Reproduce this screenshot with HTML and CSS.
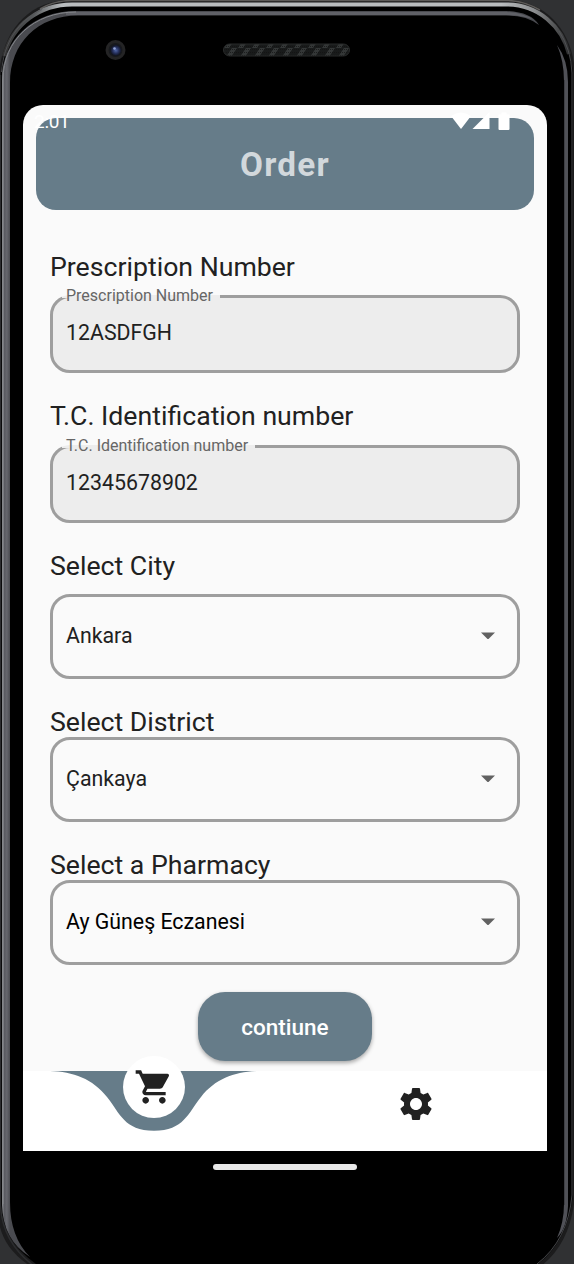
FILE: index.html
```html
<!DOCTYPE html>
<html lang="en">
<head>
<meta charset="utf-8">
<title>Order</title>
<link rel="stylesheet" href="styles.css">
</head>
<body>
<div class="device">
  <svg class="chassis" viewBox="0 0 574 1264" aria-hidden="true">
    <defs>
      <linearGradient id="shine" gradientUnits="userSpaceOnUse" x1="5" y1="0" x2="569" y2="0">
        <stop offset="0" stop-color="#333"/><stop offset=".05" stop-color="#55585a"/><stop offset=".1" stop-color="#b9bcbe"/><stop offset=".88" stop-color="#b9bcbe"/><stop offset=".94" stop-color="#8a8c8e"/><stop offset="1" stop-color="#2c2d2e"/>
      </linearGradient>
      <linearGradient id="side" gradientUnits="userSpaceOnUse" x1="2" y1="0" x2="10" y2="0">
        <stop offset="0" stop-color="#8c8e92"/><stop offset=".3" stop-color="#5a5b61"/><stop offset=".6" stop-color="#66676d"/><stop offset="1" stop-color="#4a4b50"/>
      </linearGradient>
      <radialGradient id="lens"><stop offset="0" stop-color="#5268a8"/><stop offset=".55" stop-color="#26315f"/><stop offset="1" stop-color="#10131f"/></radialGradient>
      <pattern id="mesh" width="14" height="12" patternUnits="userSpaceOnUse">
        <rect width="14" height="12" fill="#191b1b"/><path d="M0 12 8 0h5L5 12z" fill="#343737"/>
        <path d="M0 1.500h14M0 4.500h14M0 7.500h14M0 10.500h14" stroke="#111" stroke-width=".7" stroke-dasharray="1 1"/>
      </pattern>
    </defs>
    <rect width="574" height="1264" fill="#303133"/>
    <!-- outer body -->
    <path d="M-1 75C2 30 30 0 70 0H510C548 2 574 34 575 75V1195Q571 1243 541 1266H30Q3 1248 -1 1222Z" fill="#1c1c1d"/>
    <path d="M40 9Q54 .500 72 .500H508Q524 1 540 10" fill="none" stroke="#5c5a58" stroke-width="1.500"/>
    <path d="M1 74C2 34 32 4 72 4H508C544 5 571 36 573 75V1195Q568 1241 538 1264H36Q2 1240 1 1205Z" fill="#000"/>
    <path d="M4 56C13 24 40 4.500 72 4.500H508C538 5 562 26 569 54" fill="none" stroke="url(#shine)" stroke-width="4"/>
    <path d="M1.500 72C4 42 18 21 42 9.500M559 31Q571 49 572 73V1195Q568 1240 537 1264" fill="none" stroke="#55575a" stroke-width=".8"/>
    <path d="M.500 75V1205Q2 1242 34 1266" fill="none" stroke="#2c2d2f" stroke-width="1.500"/>
    <!-- inner bevel -->
    <path d="M2 1205V80C2 39 34 11 76 11H506Q531 12 539 25Q527 15.500 506 15.500H78C38 15.500 10 43 10 83V1202Q10 1237 30 1257Q3 1240 2 1205Z" fill="url(#side)"/>
    <path d="M66 12H506Q523 12.500 534 20Q524 15.500 506 15H66Z" fill="#606167"/>
    <path d="M3 1204V80C3 40 34 12 76 12" fill="none" stroke="#85878b"/>
    <path d="M557 45Q568 60 568 82V1206Q567 1228 557 1238Q564 1222 564 1204V81Q564 61 557 45Z" fill="#505157"/>
    <path d="M564.500 80V1205" stroke="#3e3f44"/>
    <circle cx="115.500" cy="50" r="10" fill="#242425"/><circle cx="115.500" cy="50" r="7" fill="#17191d"/>
    <circle cx="115.800" cy="50.300" r="5.500" fill="url(#lens)"/><circle cx="114.500" cy="48.500" r="1.300" fill="#93a5d8"/>
    <rect x="223.500" y="44" width="126" height="12" rx="6" fill="url(#mesh)" stroke="#292b2b"/>
  </svg>

  <div class="face">
    <main class="screen">
      <div class="statusbar">
        <span class="clock">2:01</span>
        <svg class="status-icons" width="60" height="19" viewBox="0 0 60 19" fill="#fff" aria-hidden="true">
          <path d="M0 4Q10-3 20 4L10 17Z"/><path d="M21.500 17 38.500 0V17Z"/><path d="M47.500 2.500h3V.500h5v2h3V17q0 1-1 1h-9q-1 0-1-1Z"/>
        </svg>
      </div>
      <header class="appbar"><h1>Order</h1></header>

      <form class="form">
        <section class="group">
          <h2>Prescription Number</h2>
          <fieldset class="field input">
            <legend>Prescription Number</legend>
            <span>12ASDFGH</span>
          </fieldset>
        </section>
        <section class="group raised">
          <h2>T.C. Identification number</h2>
          <fieldset class="field input">
            <legend>T.C. Identification number</legend>
            <span>12345678902</span>
          </fieldset>
        </section>
        <section class="group raised city">
          <h2>Select City</h2>
          <div class="field select"><span>Ankara</span><i class="caret"></i></div>
        </section>
        <section class="group compact">
          <h2>Select District</h2>
          <div class="field select"><span>Çankaya</span><i class="caret"></i></div>
        </section>
        <section class="group compact">
          <h2>Select a Pharmacy</h2>
          <div class="field select strong"><span>Ay Güneş Eczanesi</span><i class="caret"></i></div>
        </section>
        <button class="submit" type="button">contiune</button>
      </form>

      <nav class="tabs">
        <a class="tab active">
          <svg class="notch" width="262" height="80" viewBox="0 0 262 80" aria-hidden="true">
            <path d="M27 0C50 .500 70 8 84 26C97 42 101 59.700 131 59.700S165 42 178 26C192 8 212 .500 235 0Z" fill="#667c89"/>
          </svg>
          <span class="bubble">
            <svg width="40" height="40" viewBox="0 0 24 24" fill="#212121" aria-hidden="true"><path d="M7 18c-1.100 0-1.990.900-1.990 2S5.900 22 7 22s2-.900 2-2-.900-2-2-2zM1 2v2h2l3.600 7.590-1.350 2.450c-.160.280-.250.610-.250.960 0 1.100.900 2 2 2h12v-2H7.420c-.140 0-.250-.110-.250-.250l.030-.120.900-1.630h7.450c.750 0 1.410-.410 1.750-1.030l3.580-6.490A1.003 1.003 0 0 0 20 4H5.210l-.940-2H1zm16 16c-1.100 0-1.990.900-1.990 2s.890 2 1.990 2 2-.900 2-2-.900-2-2-2z"/></svg>
          </span>
        </a>
        <a class="tab">
          <svg class="gear" width="40" height="40" viewBox="0 0 24 24" fill="#212121" aria-hidden="true"><path d="M19.140 12.940c.040-.300.060-.610.060-.940 0-.320-.020-.640-.070-.940l2.030-1.580c.180-.140.230-.410.120-.610l-1.920-3.320c-.120-.220-.370-.290-.590-.220l-2.390.960c-.500-.380-1.030-.700-1.620-.940l-.360-2.540c-.040-.240-.240-.410-.480-.410h-3.840c-.240 0-.430.170-.470.410l-.360 2.540c-.590.240-1.130.570-1.620.940l-2.390-.960c-.220-.080-.470 0-.590.220L2.740 8.870c-.120.210-.080.470.120.610l2.030 1.580c-.050.300-.090.630-.090.940s.020.640.070.940l-2.030 1.580c-.180.140-.230.410-.120.610l1.920 3.320c.120.220.370.290.590.220l2.390-.960c.500.380 1.030.700 1.620.940l.360 2.540c.050.240.240.410.480.410h3.840c.240 0 .440-.170.470-.410l.360-2.540c.590-.240 1.130-.560 1.620-.940l2.390.960c.220.080.470 0 .590-.220l1.920-3.320c.120-.220.070-.470-.120-.610l-2.010-1.580zM12 15.600c-1.980 0-3.600-1.620-3.600-3.600s1.620-3.600 3.600-3.600 3.600 1.620 3.600 3.600-1.620 3.600-3.600 3.600z"/></svg>
        </a>
      </nav>
    </main>
    <div class="home-pill"></div>
  </div>
</div>
</body>
</html>
```
FILE: styles.css
```css
* { box-sizing: border-box; }
body { margin: 0; background: #303133; font-family: Roboto, "Liberation Sans", sans-serif; color: #212121; }
.device { display: grid; width: 574px; height: 1264px; overflow: hidden; }
.device > * { grid-area: 1 / 1; }
.chassis { display: block; width: 574px; height: 1264px; }
.face { padding: 105px 27px 0 23px; }
.screen { position: relative; display: flex; flex-direction: column; height: 1046px; padding-top: 13.300px; background: #fafafa; border-radius: 20px 20px 0 0; }

.statusbar { position: absolute; top: 0; left: 0; right: 0; display: flex; justify-content: space-between; align-items: flex-start; padding: 7px 36px 0 11px; color: #fff; }
.clock { font-size: 19px; line-height: 20px; letter-spacing: -.300px; }
.appbar { display: flex; align-items: center; justify-content: center; height: 92px; margin: 0 13.300px; padding-top: 1px; background: #667c89; border-radius: 20px; }
.appbar h1 { margin: 0; font-size: 33.300px; line-height: 40px; font-weight: 700; letter-spacing: 1.200px; color: #d2d8dc; }

.form { display: flex; flex-direction: column; flex: 1; padding: 41.700px 27px 0; }
.group { display: flex; flex-direction: column; gap: 12px; margin-bottom: 29px; }
.group.raised { gap: 13px; margin-top: -1px; }
.group.city { margin-bottom: 28px; }
.group.compact { gap: 0; margin-bottom: 28px; }
.group h2 { margin: 0; font-size: 26.670px; line-height: 31px; font-weight: 400; white-space: nowrap; }
.field { width: 470px; margin: 0; border: 3px solid #9e9e9e; border-radius: 20px; font-size: 21.330px; }
.field span { line-height: 26px; }
.input { height: 78px; padding: 0 13px; background: #ededed; }
.input legend { height: 3px; margin-left: -4px; padding: 0 7px 0 4px; font-size: 16px; line-height: 2px; color: #666; white-space: nowrap; }
.input span { display: block; margin-top: 22px; }
.select { display: flex; align-items: center; justify-content: space-between; height: 85px; padding: 0 22px 1px 13px; }
.strong { color: #000; }
.caret { width: 14px; height: 7px; background: #616161; clip-path: polygon(0 0, 100% 0, 50% 100%); }
.group.city .field,
.group.compact .field { margin-top: -1px; }
.submit { align-self: center; width: 174px; height: 69px; margin-top: -1px; padding: 2px 0 0; border: 0; border-radius: 27px; background: #667c89; color: #fff; font: 500 22.500px/26px Roboto, sans-serif; box-shadow: 0 2px 4px rgba(0, 0, 0, .35); }

.tabs { display: grid; grid-template-columns: 1fr 1fr; height: 80px; background: #fff; }
.tab { display: grid; place-items: center; height: 80px; }
.tab > * { grid-area: 1 / 1; }
.notch { display: block; }
.bubble { display: grid; place-items: center; align-self: start; width: 62px; height: 62px; margin-top: -15px; border-radius: 50%; background: #fff; }
.gear { margin: -14px 0 0; }
.home-pill { width: 144px; height: 6px; margin: 13px auto 0; border-radius: 3px; background: #e8e8e8; }
```
